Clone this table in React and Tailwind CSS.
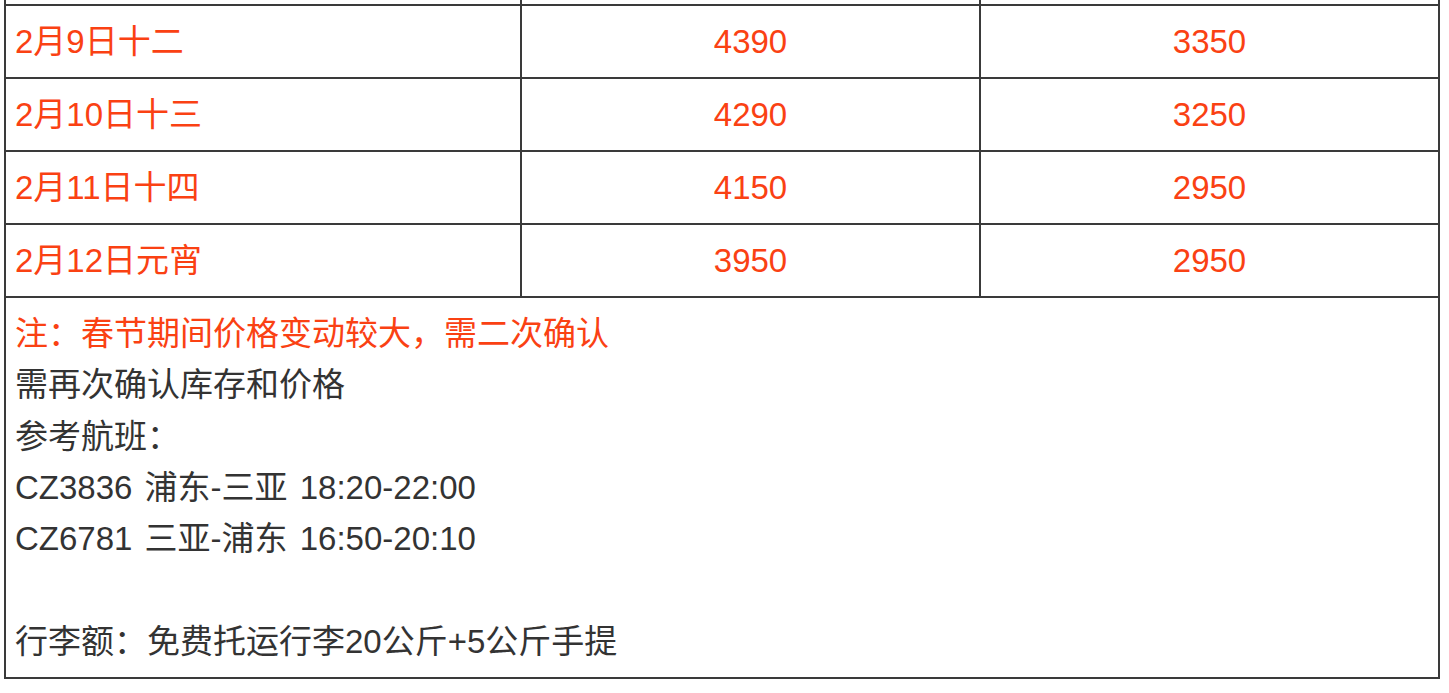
const rows = [
  { day: '2月9日十二', a: '4390', b: '3350' },
  { day: '2月10日十三', a: '4290', b: '3250' },
  { day: '2月11日十四', a: '4150', b: '2950' },
  { day: '2月12日元宵', a: '3950', b: '2950' },
];

const notes = [
  '需再次确认库存和价格',
  '参考航班：',
  'CZ3836 浦东-三亚 18:20-22:00',
  'CZ6781 三亚-浦东 16:50-20:10',
  '',
  '行李额：免费托运行李20公斤+5公斤手提',
];

function PriceRow({ day, a, b }) {
  return (
    <div className="grid grid-cols-[514px_459px_459px] border-b-2 border-[#3a3a3a] h-[73px] text-[#fa4113]">
      <div className="flex items-center pl-[9px] pb-[1px]">{day}</div>
      <div className="flex items-center justify-center border-l-2 border-[#3a3a3a] pb-[1px]">{a}</div>
      <div className="flex items-center justify-center border-l-2 border-[#3a3a3a] pb-[1px]">{b}</div>
    </div>
  );
}

export default function App() {
  return (
    <div
      className="min-h-[693px] bg-white pl-[4px] text-[33px] leading-[51px]"
      style={{ fontFamily: '"Liberation Sans", "Noto Sans CJK SC", sans-serif' }}
    >
      <div className="w-[1436px] border-x-2 border-b-2 border-[#3a3a3a]">
        {/* tail of the row above, cut off by the screenshot */}
        <div className="grid grid-cols-[514px_459px_459px] h-[6px] border-b-2 border-[#3a3a3a]">
          <div />
          <div className="border-l-2 border-[#3a3a3a]" />
          <div className="border-l-2 border-[#3a3a3a]" />
        </div>
        {rows.map((r) => (
          <PriceRow key={r.day} {...r} />
        ))}
        <div className="pl-[9px] pt-[10px] pb-[10px] text-[#333333] [word-spacing:3px]">
          <p className="h-[51.3px] text-[#fa4113]">注：春节期间价格变动较大，需二次确认</p>
          {notes.map((n, i) => (
            <p key={i} className="h-[51.3px]">
              {n}
            </p>
          ))}
        </div>
      </div>
    </div>
  );
}
